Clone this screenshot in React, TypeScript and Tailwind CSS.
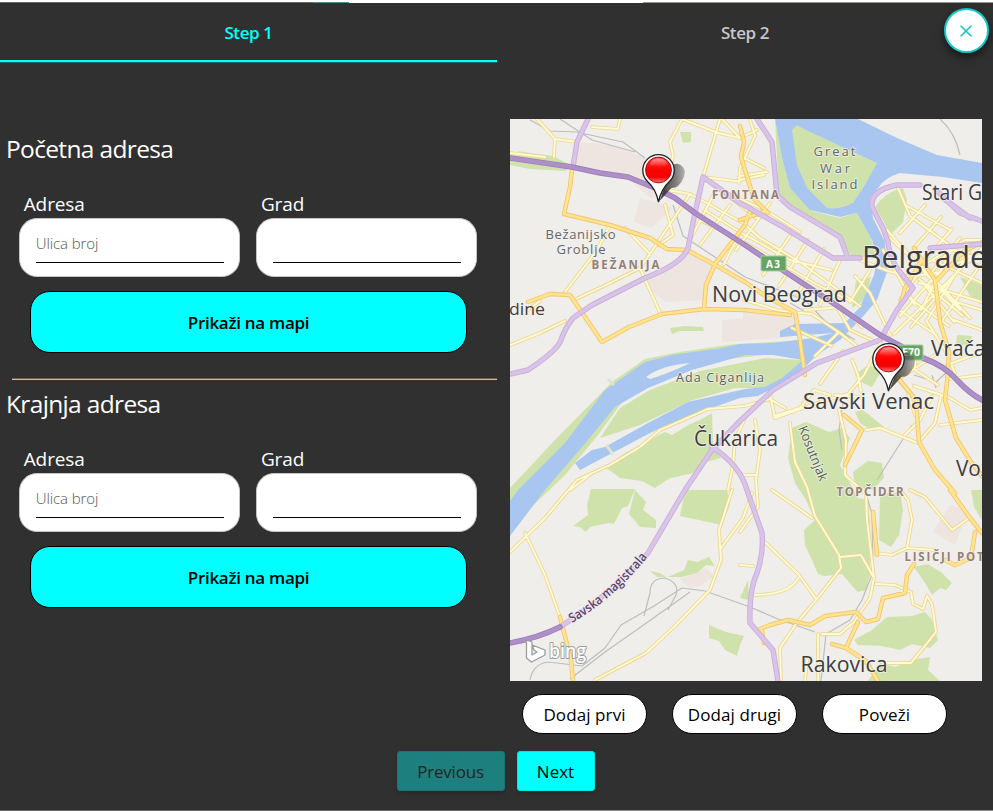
import React from "react";

const font = "font-['Open_Sans','Noto_Sans',sans-serif]";

const greens = [
  "M775 119L782 158L790 188L812 211L840 218L857 213L871 238L876 257L852 257L840 237L790 207L779 195Z",
  "M875 207Q885 192 903 188L907 200L903 222L890 235L884 222Z",
  "M510 488L555 440L612 382L645 359L680 352L735 344L810 340L806 350L720 360L670 372L625 398L598 435L565 475L518 520L510 520Z",
  "M600 438L620 408L650 390L700 371L765 358L803 360L795 372L768 388L735 388L690 401L640 425Z",
  "M510 152L545 158L570 164L566 171L530 169L510 165Z",
  "M517 151L553 156L570 165L545 165Z",
  "M605 467L625 453L640 445L665 432L672 435L690 424L700 420L712 413L713 445L721 458L706 462L698 470L690 474L670 478L655 488L642 481L620 478Z",
  "M591 489L635 489L628 506L622 508L614 524L608 523L590 527L586 532L580 527L573 526L588 515L587 505Z",
  "M635 490L646 502L643 510L656 520L656 528L640 527L629 514Z",
  "M685 490L727 490L730 505L722 525L680 516Z",
  "M792 428L806 422L829 432L842 428L850 438L840 465L858 498L868 500L870 523L870 575L866 590L858 592L853 587L842 574L824 576L818 574L812 560L805 545L804 530L815 520L806 500L795 483L788 458Z",
  "M862 410L868 414L884 427L871 430L860 423L855 412Z",
  "M853 472L868 461L882 463L884 478L872 490L855 486Z",
  "M880 494L900 492L903 510L899 535L891 547L879 540Z",
  "M854 640L872 630L887 617L912 616L925 612L932 620L938 640L930 648L912 644L900 650L882 646L858 645Z",
  "M914 567L928 564L942 573L952 583L946 590L940 588L932 595L925 583Z",
  "M912 660L930 657L928 670L940 681L868 681L880 663L895 667Z",
  "M668 577L684 570L688 560L697 562L709 557L715 566L706 565L697 573L682 577Z",
  "M709 625L726 632L744 636L740 645L737 656L725 650L719 641L709 638Z",
  "M971 490L982 490L982 520L974 507Z",
  "M680 132L691 132L691 142L683 143Z",
  "M670 328L685 326L703 327L704 331L680 331L672 334Z",
  "M960 277L982 285L982 305L970 296Z",
  "M856 280L871 277L866 299L852 308Z",
  "M855 375L868 365L882 370L872 387L861 382Z",
  "M957 335L972 336L970 345L956 345Z",
  "M650 571L660 573L666 577L657 577Z",
  "M740 598L748 580L749 600Z",
];

const builtUp = [
  "M580 142L610 145L660 163L672 193L650 198L628 178L575 164Z",
  "M640 198L665 205L672 208L652 228L634 222Z",
  "M692 250L715 264L705 300L665 302L642 282Z",
  "M722 320L800 315L792 337L722 342Z",
  "M950 505L968 510L955 545L933 532Z",
  "M812 538L830 552L823 567L813 557Z",
  "M743 310L792 318L788 332L743 335Z",
  "M680 580L706 568L714 576L700 586L690 588Z",
];

const water = [
  "M775 119L858 119L897 138L937 155L982 163L982 183L943 177L900 173Q884 178 878 188L870 198L873 218L885 242L887 272L877 300L860 320L840 340L817 355L800 372L770 390L758 396L740 398L692 415L652 432L580 470L575 463L592 450L605 447L648 423L688 402L745 389L765 387L782 378L803 360L773 355L745 355L692 370L648 388L615 407L588 440L545 490L510 536L510 501L518 490L565 443L605 390L645 362L672 355L722 348L740 344L773 343L813 338L833 333L780 337L780 331L795 324L845 323L860 307L874 275L877 258L872 240L857 213L840 217L810 210L790 188L782 158Z",
];

const minor = [
  "M537 119L555 139L577 142M555 139L554 157M510 153L545 157",
  "M592 127L618 129L620 119M682 119L670 142L673 155L668 187M720 119L703 177",
  "M668 190L690 194L743 223L760 238L800 262L860 306",
  "M703 177L735 181L764 175M690 194L650 254L640 268L606 285L576 299",
  "M610 225L597 250L565 292M625 228L650 254M665 205L673 235L659 245",
  "M640 268L661 315M716 190L690 240M730 205L700 245M745 223L724 264M770 203L736 250M790 236L763 275M808 240L779 286M824 249L797 295M840 260L820 305",
  "M720 190L765 210L800 232M700 220L742 241L775 260L816 284L850 301M706 211L740 232L790 260L831 270M705 178L757 218",
  "M750 120L755 136L740 168L739 183M740 176L767 172M744 158L764 168M722 119L740 138L757 130",
  "M510 345L540 333L565 321M744 300L780 311L812 314L840 333L858 347",
  "M805 310L842 307L862 327M792 328L832 346M833 300L850 330L874 341",
  "M883 250L915 305M887 230L927 275L960 310M898 188L910 216L982 269M925 205L900 233M941 217L914 248M952 229L924 261M960 238L930 274M905 205L950 230M890 238L936 281",
  "M888 271L910 277L940 272M900 300L924 265L965 240L982 240M919 283L982 302M932 260L982 283M940 246L982 260M954 245L921 310M969 252L928 319M980 265L940 324M899 310L936 335M906 296L949 326M919 279L963 316",
  "M900 316L936 275L979 252M936 281L970 318M927 288L954 322M911 327L960 269M894 334L982 248M951 319L982 330M956 302L982 310",
  "M860 260L888 271M855 276L870 293L890 335M850 302L870 270",
  "M510 552L545 518L577 480L610 465L640 447L660 430L708 409L745 406L770 399L785 408",
  "M525 533L545 575L560 617M570 490L592 473",
  "M745 418L735 440L733 465L728 490M732 490L719 530L721 560L710 590L673 628L646 653L595 680M721 548L743 518L752 493",
  "M770 395L775 418L820 402L848 394L864 375L882 340M774 416L800 408L814 390L830 395",
  "M790 423L795 462L807 487L815 516L839 555L841 568L816 600L796 624L780 648L781 681",
  "M840 557L861 555L874 578M907 548L912 520L908 500L900 490",
  "M839 410L846 440L845 475L866 494L867 520L874 578L870 598L854 622L840 634L822 634",
  "M866 430L880 428L918 443L935 423L941 396M875 553L892 555L907 548L935 550",
  "M876 584L895 585L911 592L913 604L923 609L927 596L932 604L936 632L911 663L886 663",
  "M755 420L760 450L756 480L758 507L740 532M740 475L757 475M772 490L812 518",
  "M765 542L799 575L816 599M799 577Q790 595 753 595",
  "M740 565L753 566M818 634L818 681M805 681L807 660",
  "M910 490L925 497L952 530L968 519M940 425L982 420M926 320L945 350L955 373M947 365L982 352M949 379L982 375",
  "M900 378L920 365L938 353M916 350L915 370L938 385M932 396L920 420L905 435M914 386L948 397L970 410L982 408M894 375L907 390L915 415",
  "M852 360L858 375L861 391M838 333L815 356M820 384L843 351M835 395L860 397",
  "M682 119L718 133L740 138M540 301L522 314",
];

const major = [
  "M572 170L570 187L564 214L610 225L650 238L667 249L687 250L717 266L745 282L767 297L795 312L800 340L805 375",
  "M528 302L550 294L570 295L602 342L629 327L662 314L705 309L745 310L790 315",
  "M704 308L706 285L715 264L745 225L750 211",
  "M740 126L744 142L741 157L754 199L768 213M766 211L740 220",
  "M922 260L905 288L900 306M914 248L935 280L940 321M936 281L963 252L982 242M940 322L949 352L947 382L945 400L956 438L971 462L982 476",
  "M898 378L916 400L919 442L935 470L955 493M844 415L862 430L845 465",
  "M950 490L970 518L982 533M975 532L971 558L955 565L945 560",
  "M873 512L877 555M758 630L770 625L788 620L810 625L825 616L856 612L866 622L878 619L883 598L905 593L907 575L914 564",
  "M858 622L846 648L832 644M846 648L866 661L878 681M762 631L764 643M560 617L566 640L571 660L573 681",
];

const arterial = [
  "M588 119L577 142L573 167",
  "M703 177L695 213L688 248Q682 264 645 278L592 305L573 318Q565 328 561 340Q558 350 528 370L510 374",
  "M703 177L740 203L783 227L833 258L860 258",
  "M757 119L772 142L777 195L790 207L840 237L848 258",
  "M920 185L897 185Q870 190 872 207L883 228L888 242Q890 260 900 272L913 288L897 310L880 340L817 363L773 390L740 421L712 450L685 490L648 553Q610 595 560 627",
  "M712 447Q740 465 747 490L762 533Q764 552 757 573Q749 590 750 623L773 650L778 681",
  "M930 248L982 244M935 189L960 213L982 221M943 198L970 218",
];

const rails = [
  "M530 120L550 131L576 132L623 142L645 158M560 119L592 140L635 152",
  "M673 205L683 236L745 277L805 300L825 321L855 340M790 303L820 320L850 338",
  "M843 403L839 430L842 450M912 425L877 480M865 490L872 514L873 572L862 600L850 620L826 634L821 681",
  "M530 680Q533 664 548 662L582 666L605 648L621 625L654 606L682 588L705 591L750 607L778 619L815 632",
  "M570 679L605 652L645 624L690 592M644 616L650 593Q650 578 665 578Q680 583 676 595L668 610",
  "M914 375L936 382L948 371M932 375L936 388M940 119Q955 132 960 155M940 285L955 302",
];

type LabelProps = {
  x: number;
  y: number;
  w: number;
  size: number;
  children: string;
  fill?: string;
  weight?: number;
  spaced?: boolean;
  transform?: string;
};

function Label({ x, y, w, size, children, fill = "#3e3d42", weight = 500, spaced = false, transform }: LabelProps) {
  return (
    <text
      x={x}
      y={y}
      textLength={w}
      lengthAdjust={spaced ? "spacing" : "spacingAndGlyphs"}
      fontSize={size}
      fontWeight={weight}
      fill={fill}
      stroke="#f4f2ee"
      strokeWidth={2}
      strokeOpacity={0.7}
      strokeLinejoin="round"
      paintOrder="stroke"
      transform={transform}
    >
      {children}
    </text>
  );
}

function Roads({ paths, edge, core, width }: { paths: string[]; edge: string; core: string; width: number }) {
  const d = paths.join("");
  return (
    <g fill="none" strokeLinejoin="round" strokeLinecap="round">
      <path d={d} stroke={edge} strokeWidth={width} />
      <path d={d} stroke={core} strokeWidth={width - 1.8} />
    </g>
  );
}

function Pin({ x, y }: { x: number; y: number }) {
  return (
    <g transform={`translate(${x} ${y})`}>
      <path d="M1 31L8 12Q10-8 20-6Q29-2 25 8Q21 18 13 18Z" fill="url(#pinShadow)" />
      <path
        d="M0 32C-2 22-6 16-10.500 12A15.700 15.700 0 1 1 10.500 12C6 16 2 22 0 32Z"
        fill="#fff"
        stroke="#222"
        strokeWidth="1.3"
      />
      <circle r="12.900" fill="url(#pinRed)" stroke="#a70000" strokeWidth=".9" />
      <path d="M-9-5Q-8-11.500 0-11.800Q8-11.500 9-5Q0-1 -9-5Z" fill="url(#pinGloss)" />
    </g>
  );
}

function BelgradeMap() {
  return (
    <svg
      viewBox="510 119 472 562"
      className="block h-[562px] w-[472px] font-['Open_Sans','Noto_Sans',sans-serif]"
    >
      <defs>
        <linearGradient id="pinRed" x1="0" y1="0" x2="0" y2="1">
          <stop offset="0" stopColor="#f33" />
          <stop offset=".5" stopColor="#f00" />
          <stop offset=".78" stopColor="#f00505" />
          <stop offset="1" stopColor="#ff7878" />
        </linearGradient>
        <linearGradient id="pinGloss" x1="0" y1="0" x2="0" y2="1">
          <stop offset="0" stopColor="#fff" stopOpacity=".5" />
          <stop offset="1" stopColor="#fff" stopOpacity="0" />
        </linearGradient>
        <linearGradient id="pinShadow" x1="0" y1="0" x2="1" y2="0">
          <stop offset="0" stopColor="#222" stopOpacity=".85" />
          <stop offset=".6" stopColor="#444" stopOpacity=".7" />
          <stop offset="1" stopColor="#555" stopOpacity=".4" />
        </linearGradient>
      </defs>
      <rect x="510" y="119" width="472" height="562" fill="#efeeea" />
      <path d={builtUp.join("")} fill="#eee4e0" />
      <path d={greens.join("")} fill="#cfe2ac" />
      <path d={water.join("")} fill="#a9c6f1" />
      <path d="M792 130L797 125L804 129L877 163L865 185L853 203Q840 210 827 208L807 188L797 165Z" fill="#cfe2ac" />
      <path d="M646 377Q662 365 690 363Q670 373 650 379Z" fill="#efeeea" />
      <path d="M606 445L613 454M608 379L614 385" stroke="#dfe3d2" strokeWidth="3" />
      <path d={rails.join("")} fill="none" stroke="#bdbdc0" strokeWidth="1.2" strokeLinejoin="round" />
      <Roads paths={minor} edge="#ecd694" core="#fffbd2" width={3.7} />
      <Roads paths={major} edge="#f5c470" core="#ffe58d" width={4.5} />
      <Roads paths={arterial} edge="#c9afdb" core="#d9c3e8" width={5.4} />
      <Roads
        paths={[
          "M510 158L572 167L600 173L628 177L655 188L675 198L695 213L745 245L787 273L833 303L880 335L923 358Q945 366 957 380Q970 394 982 400",
          "M510 643Q538 638 560 627",
        ]}
        edge="#9d7dbb"
        core="#ad90c8"
        width={5.6}
      />
      <rect x="761" y="256" width="25" height="15" rx="1" fill="#66a466" stroke="#a8cda4" />
      <text x="766" y="267.500" textLength="14" fontSize="10" fontWeight="700" fill="#fff">A3</text>
      <rect x="898" y="345" width="25" height="15" rx="1" fill="#66a466" stroke="#a8cda4" />
      <text x="902" y="356" textLength="18" lengthAdjust="spacingAndGlyphs" fontSize="10" fontWeight="700" fill="#fff">E70</text>

      <Label x={813.5} y={156} w={42} size={13} fill="#666a63" spaced>Great</Label>
      <Label x={820} y={172.5} w={30} size={13} fill="#666a63" spaced>War</Label>
      <Label x={811.5} y={188.5} w={46} size={13} fill="#666a63" spaced>Island</Label>
      <Label x={712} y={199} w={67} size={11.5} fill="#948078" weight={700} spaced>FONTANA</Label>
      <Label x={545.5} y={239} w={70} size={13} fill="#66666a" spaced>Bežanijsko</Label>
      <Label x={556.5} y={254} w={49} size={13} fill="#66666a" spaced>Groblje</Label>
      <Label x={591.5} y={269} w={68} size={11.5} fill="#948078" weight={700} spaced>BEŽANIJA</Label>
      <Label x={922} y={199.5} w={68} size={22}>Stari Gr</Label>
      <Label x={862} y={267.5} w={125} size={31.5}>Belgrade</Label>
      <Label x={712} y={301.5} w={135} size={21.5}>Novi Beograd</Label>
      <Label x={499} y={315} w={46} size={16.5}>edine</Label>
      <Label x={931} y={355.5} w={63} size={22}>Vračar</Label>
      <Label x={676} y={382} w={88} size={12.5} fill="#536268" spaced>Ada Ciganlija</Label>
      <Label x={803} y={408.5} w={131} size={21.5}>Savski Venac</Label>
      <Label x={694} y={446} w={84} size={21.5}>Čukarica</Label>
      <Label x={956} y={476} w={70} size={21}>Voždov</Label>
      <Label x={836.5} y={496} w={67} size={11.5} fill="#948078" weight={700} spaced>TOPČIDER</Label>
      <Label x={904.5} y={561} w={90} size={11.5} fill="#948078" weight={700} spaced>LISIČJI POTO</Label>
      <Label x={800.5} y={672} w={87} size={21.5}>Rakovica</Label>
      <Label x={0} y={0} w={58} size={13} fill="#536250" transform="translate(798 428) rotate(68)">Kosutnjak</Label>

      <path id="highwayName" d="M572 623Q615 598 651 553" fill="none" />
      <text fontSize="13" fontWeight="600" fill="#594467" stroke="#efe8f1" strokeWidth="2" paintOrder="stroke">
        <textPath href="#highwayName" textLength="101" lengthAdjust="spacingAndGlyphs">Savska magistrala</textPath>
      </text>

      <g fill="#fff" stroke="#9c9c9c" strokeWidth="1.3" strokeLinejoin="round">
        <path d="M526.500 640L532 642V655L537 652L534 650L532 645L545 650V655L531.500 662L526.500 658Z" />
        <text x="549" y="657.500" textLength="37" lengthAdjust="spacingAndGlyphs" fontSize="20" fontWeight="600" paintOrder="stroke" strokeWidth="2">
          bing
        </text>
      </g>
      <Pin x={658.5} y={170} />
      <Pin x={888.5} y={359} />
    </svg>
  );
}

function Field({ label, placeholder }: { label: string; placeholder?: string }) {
  return (
    <label className="block w-[221.6px]">
      <span className="block h-7 pl-[5px] text-[19px] leading-7 tracking-[-0.1px] text-white">{label}</span>
      <span className="block h-[59px] rounded-[18px] border border-[#c4c4c4] bg-white px-4 pt-2">
        <input
          placeholder={placeholder}
          className="block h-9 w-[188px] border-b border-black bg-transparent pb-1 text-[15px] tracking-[-0.1px] outline-none placeholder:font-light placeholder:text-[#555]"
        />
      </span>
    </label>
  );
}

function AddressForm({ title }: { title: string }) {
  return (
    <section className="h-[255px] pt-[10px]">
      <h2 className="h-[40px] pl-[6px] text-[24.5px] leading-10 tracking-[-0.65px] text-white">{title}</h2>
      <div className="mt-[21px] flex gap-[15.6px] pl-[18.7px]">
        <Field label="Adresa" placeholder="Ulica broj" />
        <Field label="Grad" />
      </div>
      <button className="mt-[14px] ml-[30px] block h-[62px] w-[437px] rounded-[20px] border border-black bg-[#00ffff] pt-[2px] text-[17px] font-semibold tracking-[-0.3px]">
        Prikaži na mapi
      </button>
    </section>
  );
}

export default function App() {
  return (
    <div className={`relative flex h-[811px] w-[993px] flex-col overflow-hidden bg-[#303030] text-black ${font}`}>
      <div className="h-[2px] shrink-0 bg-white" />
      <div className="flex h-px shrink-0">
        <div className="w-[313px] bg-[#666]" />
        <div className="w-9 bg-[#489292]" />
        <div className="w-[294px] bg-white" />
        <div className="flex-1 bg-[#999089]" />
      </div>
      <nav className="flex h-[60px] shrink-0 items-start text-[17px] font-semibold tracking-[-0.4px]">
        <button className="h-[59px] w-[497px] border-b-2 border-[#00ffff] pt-[3px] text-[#00ffff] shadow-[0_1px_0_#266]">Step 1</button>
        <button className="h-[59px] w-[496px] pt-px text-[#c8c8c8]">Step 2</button>
      </nav>

      <main className="flex h-[670px] shrink-0 pt-[56px]">
        <div className="w-[510px]">
          <AddressForm title="Početna adresa" />
          <div className="relative">
            <div className="absolute top-[4px] left-3 h-[2px] w-[485px] border-t border-[#6d6153] bg-[#d8b998]" />
            <AddressForm title="Krajnja adresa" />
          </div>
        </div>
        <div className="w-[472px]">
          <BelgradeMap />
          <div className="mt-[13px] ml-[12px] flex gap-[25px] text-[17px] font-medium tracking-[0.1px]">
            <button className="h-10 w-[125px] rounded-[20px] border border-black bg-white pt-px">Dodaj prvi</button>
            <button className="h-10 w-[125px] rounded-[20px] border border-black bg-white pt-px">Dodaj drugi</button>
            <button className="h-10 w-[125px] rounded-[20px] border border-black bg-white pt-px">Poveži</button>
          </div>
        </div>
      </main>

      <footer className="mt-[18px] mr-[2px] flex justify-center gap-3 text-[17px] font-medium">
        <button className="h-10 w-[108px] rounded-[3px] border border-[#1b7474] bg-[#1e7f7f] pt-[2px] tracking-[-0.2px] text-[#202626] shadow-md">Previous</button>
        <button className="h-10 w-[78px] rounded-[3px] border border-[#00e6e6] bg-[#00ffff] pt-[2px] shadow-md">Next</button>
      </footer>
      <div className="mt-auto flex h-px">
        <div className="w-[560px] bg-[#666]" />
        <div className="flex-1 bg-[#8a8a8a]" />
      </div>

      <button
        aria-label="Close"
        className="absolute top-2 left-[944px] flex h-[45px] w-[45px] items-center justify-center rounded-full border-2 border-[#12c8c8] bg-white pr-px shadow-[0_4px_8px_rgba(0,0,0,0.55)]"
      >
        <svg width="12" height="12" viewBox="0 0 12 12" fill="none" stroke="#10c4c4" strokeWidth="1.500" strokeLinecap="round">
          <path d="M1 1L11 11M11 1L1 11" />
        </svg>
      </button>
    </div>
  );
}
